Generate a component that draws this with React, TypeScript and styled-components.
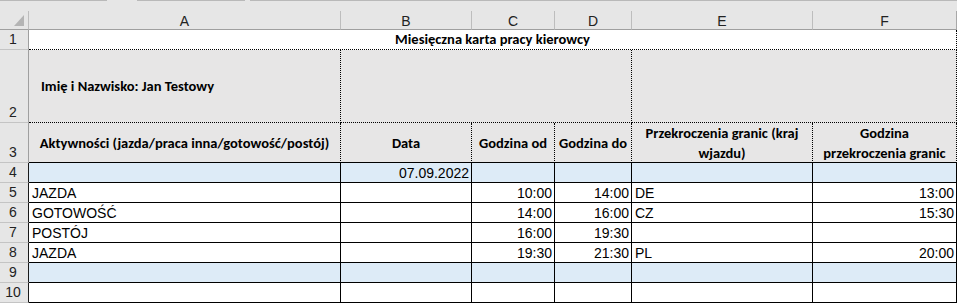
import React from "react";
import styled, { createGlobalStyle, css } from "styled-components";

const GlobalStyle = createGlobalStyle`
  html, body { margin: 0; padding: 0; background: #ffffff; }
  body { font-family: "Liberation Sans", Arial, sans-serif; }
  * { box-sizing: border-box; }
`;

const HEAD_FONT = `Carlito, Calibri, Lato, "Open Sans", sans-serif`;
const DATA_FONT = `"Liberation Sans", Arial, sans-serif`;

type Line = "solid" | "dotted" | "grid" | "none";

const lineCss = (side: "right" | "bottom", l: Line) => {
  if (l === "solid") return css`border-${side}: 1px solid #000;`;
  if (l === "dotted") return css`border-${side}: 1px dotted #000;`;
  if (l === "grid") return css`border-${side}: 1px solid #d4d4d4;`;
  return css`border-${side}: 1px solid transparent;`;
};

const Sheet = styled.div`
  display: grid;
  width: 957px;
  grid-template-columns: 29px 312px 131px 83px 77px 181px 144px;
  grid-template-rows: 11px 19px 20px 73px 40px repeat(7, 20px);
  background: #ffffff;
  overflow: hidden;
`;

const TopStrip = styled.div`
  grid-column: 1 / -1;
  display: flex;
  background: #e6e6e6;
`;

const StripSegment = styled.div<{ $w: number }>`
  width: ${(p) => p.$w}px;
  flex: ${(p) => (p.$w ? "none" : "1")};
  height: 1px;
  background: #b9b9b9;
`;

const StripGap = styled.div<{ $w: number }>`
  width: ${(p) => p.$w}px;
  height: 1px;
`;

const Corner = styled.div`
  display: flex;
  justify-content: flex-end;
  align-items: flex-end;
  padding: 0 4px 3px 0;
  background: #e6e6e6;
  border-right: 1px solid #bdbdbd;
  border-bottom: 1px solid #9f9f9f;
`;

const CornerMark = styled.div`
  width: 10px;
  height: 11px;
  background: #b4b4b4;
  clip-path: polygon(100% 0, 100% 100%, 0 100%);
`;

const ColHead = styled.div<{ $last?: boolean }>`
  display: flex;
  align-items: center;
  justify-content: center;
  background: #e6e6e6;
  border-right: 1px solid ${(p) => (p.$last ? "#a8a8a8" : "#bdbdbd")};
  border-bottom: 1px solid #9f9f9f;
  font-family: ${DATA_FONT};
  font-size: 14px;
  color: #222;
  padding-top: 1px;
`;

const RowHead = styled.div<{ $dark?: boolean }>`
  display: flex;
  align-items: flex-end;
  justify-content: center;
  padding: 0 2px 1px 0;
  background: #e6e6e6;
  border-right: 1px solid ${(p) => (p.$dark ? "#1a1a1a" : "#9f9f9f")};
  border-bottom: 1px solid #c4c4c4;
  font-family: ${DATA_FONT};
  font-size: 14px;
  line-height: 17px;
  color: #222;
`;

type CellProps = {
  $span?: number;
  $bg?: string;
  $right?: Line;
  $bottom?: Line;
  $h?: "left" | "center" | "right";
  $v?: "center" | "flex-end";
  $head?: boolean;
  $indent?: number;
};

const Cell = styled.div<CellProps>`
  grid-column: span ${(p) => p.$span ?? 1};
  display: flex;
  align-items: ${(p) => p.$v ?? "flex-end"};
  justify-content: ${(p) =>
    p.$h === "right" ? "flex-end" : p.$h === "center" ? "center" : "flex-start"};
  text-align: ${(p) => p.$h ?? "left"};
  background: ${(p) => p.$bg ?? "#ffffff"};
  ${(p) => lineCss("right", p.$right ?? "solid")}
  ${(p) => lineCss("bottom", p.$bottom ?? "solid")}
  padding: 0 ${(p) => (p.$h === "right" ? 2 : 3)}px 0 ${(p) => p.$indent ?? 3}px;
  white-space: nowrap;
  overflow: hidden;
  ${(p) =>
    p.$head
      ? css`
          font-family: ${HEAD_FONT};
          font-weight: 700;
          font-size: 14.5px;
          line-height: 20px;
          color: #000;
        `
      : css`
          font-family: ${DATA_FONT};
          font-size: 14px;
          line-height: 17px;
          color: #000;
        `}
`;

const Wrap = styled.span`
  white-space: normal;
  display: block;
`;

const HEAD_BG = "#e7e6e6";
const BLUE = "#ddebf7";

type Entry = {
  activity: string;
  date: string;
  from: string;
  to: string;
  country: string;
  crossing: string;
  blue?: boolean;
};

const entries: Entry[] = [
  { activity: "", date: "07.09.2022", from: "", to: "", country: "", crossing: "", blue: true },
  { activity: "JAZDA", date: "", from: "10:00", to: "14:00", country: "DE", crossing: "13:00" },
  { activity: "GOTOWOŚĆ", date: "", from: "14:00", to: "16:00", country: "CZ", crossing: "15:30" },
  { activity: "POSTÓJ", date: "", from: "16:00", to: "19:30", country: "", crossing: "" },
  { activity: "JAZDA", date: "", from: "19:30", to: "21:30", country: "PL", crossing: "20:00" },
  { activity: "", date: "", from: "", to: "", country: "", crossing: "", blue: true },
  { activity: "", date: "", from: "", to: "", country: "", crossing: "" },
];

const columns = ["A", "B", "C", "D", "E", "F"];

export default function App() {
  return (
    <>
      <GlobalStyle />
      <Sheet>
        <TopStrip>
          <StripSegment $w={107} />
          <StripGap $w={30} />
          <StripSegment $w={108} />
          <StripGap $w={5} />
          <StripSegment $w={0} />
        </TopStrip>

        <Corner>
          <CornerMark />
        </Corner>
        {columns.map((c, i) => (
          <ColHead key={c} $last={i === columns.length - 1}>
            {c}
          </ColHead>
        ))}

        <RowHead>1</RowHead>
        <Cell $span={6} $head $h="center" $right="dotted" $bottom="dotted">
          Miesięczna karta pracy kierowcy
        </Cell>

        <RowHead>2</RowHead>
        <Cell $head $bg={HEAD_BG} $v="center" $indent={12} $right="dotted" $bottom="dotted">
          Imię i Nazwisko: Jan Testowy
        </Cell>
        <Cell $span={3} $head $bg={HEAD_BG} $right="dotted" $bottom="dotted" />
        <Cell $span={2} $head $bg={HEAD_BG} $right="dotted" $bottom="dotted" />

        <RowHead>3</RowHead>
        <Cell $head $bg={HEAD_BG} $h="center" $v="center" $right="dotted">
          Aktywności (jazda/praca inna/gotowość/postój)
        </Cell>
        <Cell $head $bg={HEAD_BG} $h="center" $v="center" $right="dotted">
          Data
        </Cell>
        <Cell $head $bg={HEAD_BG} $h="center" $v="center" $right="dotted">
          Godzina od
        </Cell>
        <Cell $head $bg={HEAD_BG} $h="center" $v="center" $right="dotted">
          Godzina do
        </Cell>
        <Cell $head $bg={HEAD_BG} $h="center" $v="center" $right="dotted">
          <Wrap>
            Przekroczenia granic (kraj
            <br />
            wjazdu)
          </Wrap>
        </Cell>
        <Cell $head $bg={HEAD_BG} $h="center" $v="center" $right="dotted">
          <Wrap>
            Godzina
            <br />
            przekroczenia granic
          </Wrap>
        </Cell>

        {entries.map((e, i) => {
          const bg = e.blue ? BLUE : "#ffffff";
          return (
            <React.Fragment key={i}>
              <RowHead $dark>{i + 4}</RowHead>
              <Cell $bg={bg}>{e.activity}</Cell>
              <Cell $bg={bg} $h="right">{e.date}</Cell>
              <Cell $bg={bg} $h="right">{e.from}</Cell>
              <Cell $bg={bg} $h="right">{e.to}</Cell>
              <Cell $bg={bg}>{e.country}</Cell>
              <Cell $bg={bg} $h="right">{e.crossing}</Cell>
            </React.Fragment>
          );
        })}
      </Sheet>
    </>
  );
}
